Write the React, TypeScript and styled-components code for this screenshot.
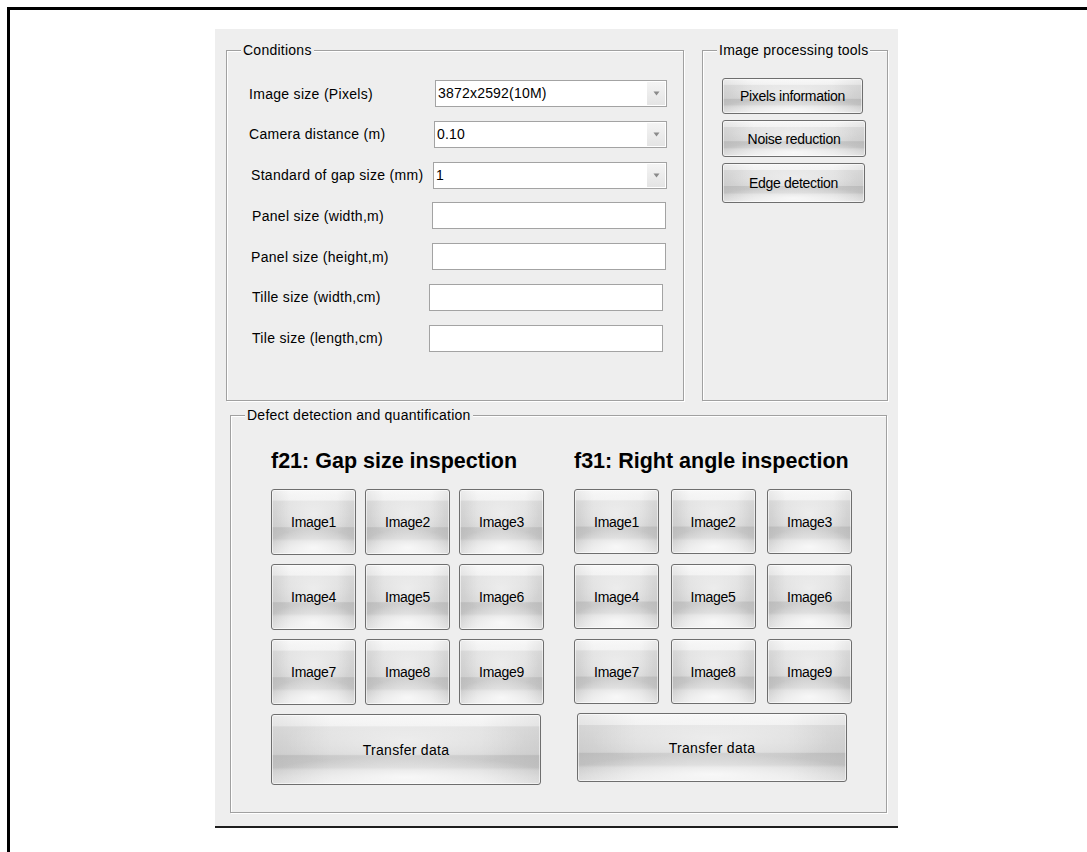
import React from "react";
import styled, { createGlobalStyle } from "styled-components";

const GlobalStyle = createGlobalStyle`
  html, body {
    margin: 0;
    padding: 0;
    background: #ffffff;
    overflow: hidden;
  }
  body {
    font-family: "Liberation Sans", Arial, sans-serif;
    color: #000;
  }
`;

const Frame = styled.div`
  margin: 7px 0 0 7px;
  height: 845px;
  box-sizing: border-box;
  border-top: 3px solid #000;
  border-left: 3px solid #000;
  padding: 19px 0 0 205px;
`;

const Window = styled.div`
  width: 683px;
  height: 799px;
  box-sizing: border-box;
  background: #eeeeee;
  border-bottom: 2px solid #1e1e1e;
  padding-top: 21px;
  display: flex;
  flex-direction: column;
`;

const TopRow = styled.div`
  display: flex;
  padding-left: 11px;
  gap: 18px;
`;

const Group = styled.div<{ $w: number; $h: number; $left?: number; $top?: number }>`
  position: relative;
  width: ${(p) => p.$w}px;
  height: ${(p) => p.$h}px;
  margin-left: ${(p) => p.$left ?? 0}px;
  margin-top: ${(p) => p.$top ?? 0}px;
  box-sizing: border-box;
  border: 1px solid #a0a0a0;
  box-shadow: 1px 1px 0 #ffffff, inset 1px 1px 0 #ffffff;
`;

const GroupTitle = styled.span`
  position: absolute;
  top: -9px;
  left: 14px;
  padding: 0 2px;
  background: #eeeeee;
  font-size: 14px;
  letter-spacing: 0.25px;
  line-height: 16px;
  white-space: nowrap;
`;

const Rows = styled.div`
  display: flex;
  flex-direction: column;
  gap: 13.8px;
  padding-top: 29px;
`;

const Row = styled.div<{ $labelX: number; $fieldX: number; $fieldW: number }>`
  display: grid;
  grid-template-columns: ${(p) => p.$fieldX - p.$labelX}px ${(p) => p.$fieldW}px;
  align-items: center;
  height: 27px;
  padding-left: ${(p) => p.$labelX - 1}px;
`;

const Label = styled.span`
  font-size: 14px;
  letter-spacing: 0.3px;
  white-space: nowrap;
`;

const SelectBox = styled.div`
  display: flex;
  height: 27px;
  box-sizing: border-box;
  border: 1px solid #a3a3a3;
  background: #ffffff;
`;

const SelectValue = styled.span`
  flex: 1;
  padding-left: 2px;
  font-size: 14px;
  letter-spacing: 0.2px;
  line-height: 25px;
  white-space: nowrap;
`;

const ArrowCell = styled.span`
  width: 18px;
  margin: 1px;
  display: flex;
  align-items: center;
  justify-content: center;
  background: linear-gradient(to bottom, #f4f4f4, #e4e4e4);
`;

const TextBox = styled.div`
  height: 27px;
  box-sizing: border-box;
  border: 1px solid #a3a3a3;
  background: #ffffff;
`;

const ToolStack = styled.div`
  display: flex;
  flex-direction: column;
  align-items: flex-start;
  gap: 6px;
  padding: 27px 0 0 19px;
`;

const GlossButton = styled.button<{ $w: number; $h: number; $spacing?: number }>`
  width: ${(p) => p.$w}px;
  height: ${(p) => p.$h}px;
  margin: 0;
  padding: 0;
  box-sizing: border-box;
  border: 1px solid #6e6e6e;
  border-radius: 3px;
  font-family: "Liberation Sans", Arial, sans-serif;
  font-size: 14px;
  letter-spacing: ${(p) => p.$spacing ?? -0.3}px;
  color: #000;
  box-shadow: inset 0 0 0 1px rgba(255, 255, 255, 0.55);
  background:
    radial-gradient(ellipse 55% 30% at 50% 90%, rgba(255, 255, 255, 0.75), rgba(255, 255, 255, 0) 100%),
    radial-gradient(ellipse 45% 40% at 50% 38%, rgba(255, 255, 255, 0.45), rgba(255, 255, 255, 0) 100%),
    linear-gradient(
      to right,
      rgba(0, 0, 0, 0.06),
      rgba(0, 0, 0, 0) 22%,
      rgba(0, 0, 0, 0) 78%,
      rgba(0, 0, 0, 0.06)
    ),
    linear-gradient(
      to bottom,
      #f8f8f8 0%,
      #f1f1f1 16%,
      #e2e2e2 17%,
      #d9d9d9 57%,
      #c6c6c6 59%,
      #cbcbcb 76%,
      #d9d9d9 80%,
      #ebebeb 100%
    );
`;

const Inspections = styled.div`
  display: flex;
  gap: 30px;
  padding: 32px 0 0 40px;
`;

const InspectionColumn = styled.div`
  display: flex;
  flex-direction: column;
`;

const Heading = styled.h2`
  margin: 0 0 15px;
  height: 26px;
  font-size: 21.5px;
  line-height: 26px;
  font-weight: bold;
  white-space: nowrap;
`;

const ImageGrid = styled.div<{ $colGap: number; $rowGap: number }>`
  display: grid;
  grid-template-columns: repeat(3, 85px);
  column-gap: ${(p) => p.$colGap}px;
  row-gap: ${(p) => p.$rowGap}px;
`;

const TransferRow = styled.div<{ $shift: number }>`
  margin-top: 9px;
  padding-left: ${(p) => p.$shift}px;
`;

const DropArrow = () => (
  <svg width="7" height="5" viewBox="0 0 7 5">
    <path d="M0.5 0.5 L6.5 0.5 L3.5 4.5 Z" fill="#8a8a8a" />
  </svg>
);

type FieldRow = {
  label: string;
  labelX: number;
  fieldX: number;
  fieldW: number;
  value?: string;
};

const conditionRows: FieldRow[] = [
  { label: "Image size (Pixels)", labelX: 23, fieldX: 209, fieldW: 232, value: "3872x2592(10M)" },
  { label: "Camera distance (m)", labelX: 23, fieldX: 208, fieldW: 233, value: "0.10" },
  { label: "Standard of gap size (mm)", labelX: 25, fieldX: 207, fieldW: 234, value: "1" },
  { label: "Panel size (width,m)", labelX: 26, fieldX: 206, fieldW: 234 },
  { label: "Panel size (height,m)", labelX: 25, fieldX: 206, fieldW: 234 },
  { label: "Tille size (width,cm)", labelX: 26, fieldX: 203, fieldW: 234 },
  { label: "Tile size (length,cm)", labelX: 26, fieldX: 203, fieldW: 234 },
];

const images = Array.from({ length: 9 }, (_, i) => `Image${i + 1}`);

export default function App() {
  return (
    <>
      <GlobalStyle />
      <Frame>
        <Window>
          <TopRow>
            <Group $w={458} $h={351}>
              <GroupTitle>Conditions</GroupTitle>
              <Rows>
                {conditionRows.map((r) => (
                  <Row key={r.label} $labelX={r.labelX} $fieldX={r.fieldX} $fieldW={r.fieldW}>
                    <Label>{r.label}</Label>
                    {r.value !== undefined ? (
                      <SelectBox>
                        <SelectValue>{r.value}</SelectValue>
                        <ArrowCell>
                          <DropArrow />
                        </ArrowCell>
                      </SelectBox>
                    ) : (
                      <TextBox />
                    )}
                  </Row>
                ))}
              </Rows>
            </Group>
            <Group $w={186} $h={351}>
              <GroupTitle>Image processing tools</GroupTitle>
              <ToolStack>
                <GlossButton $w={141} $h={36}>Pixels information</GlossButton>
                <GlossButton $w={144} $h={37}>Noise reduction</GlossButton>
                <GlossButton $w={143} $h={40}>Edge detection</GlossButton>
              </ToolStack>
            </Group>
          </TopRow>
          <Group $w={657} $h={398} $left={15} $top={14}>
            <GroupTitle>Defect detection and quantification</GroupTitle>
            <Inspections>
              <InspectionColumn>
                <Heading>f21: Gap size inspection</Heading>
                <ImageGrid $colGap={9} $rowGap={9}>
                  {images.map((n) => (
                    <GlossButton key={n} $w={85} $h={66}>
                      {n}
                    </GlossButton>
                  ))}
                </ImageGrid>
                <TransferRow $shift={0}>
                  <GlossButton $w={270} $h={71} $spacing={0.3}>
                    Transfer data
                  </GlossButton>
                </TransferRow>
              </InspectionColumn>
              <InspectionColumn>
                <Heading>f31: Right angle inspection</Heading>
                <ImageGrid $colGap={11.5} $rowGap={10}>
                  {images.map((n) => (
                    <GlossButton key={n} $w={85} $h={65}>
                      {n}
                    </GlossButton>
                  ))}
                </ImageGrid>
                <TransferRow $shift={3}>
                  <GlossButton $w={270} $h={69} $spacing={0.3}>
                    Transfer data
                  </GlossButton>
                </TransferRow>
              </InspectionColumn>
            </Inspections>
          </Group>
        </Window>
      </Frame>
    </>
  );
}
